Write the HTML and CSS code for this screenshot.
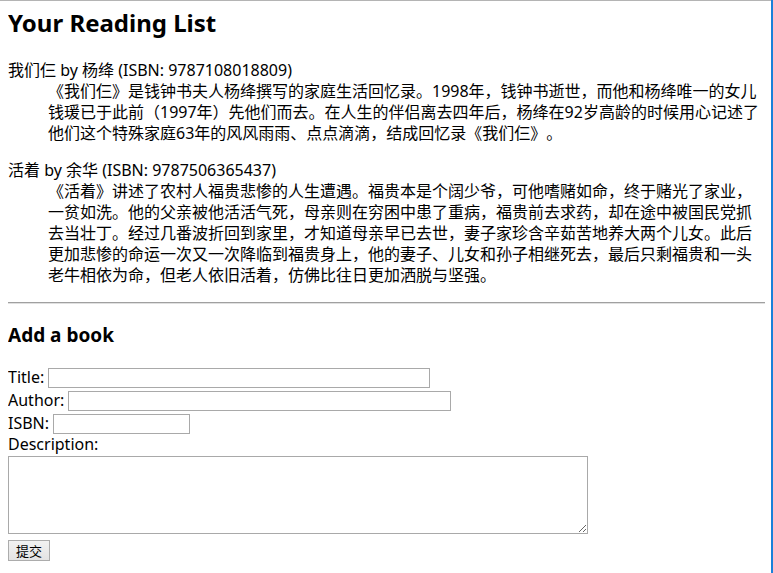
FILE: index.html
```html
<!DOCTYPE html>
<html lang="zh-CN">
<head>
<meta charset="utf-8">
<title>Your Reading List</title>
<link rel="stylesheet" href="styles.css">
</head>
<body>
<h1 class="page-title">Your Reading List</h1>
<dl class="book">
  <dt class="book-head">我们仨 by 杨绛 (ISBN: 9787108018809)</dt>
  <dd class="book-desc">《我们仨》是钱钟书夫人杨绛撰写的家庭生活回忆录。1998年，钱钟书逝世，而他和杨绛唯一的女儿钱瑗已于此前（1997年）先他们而去。在人生的伴侣离去四年后，杨绛在92岁高龄的时候用心记述了他们这个特殊家庭63年的风风雨雨、点点滴滴，结成回忆录《我们仨》。</dd>
</dl>
<dl class="book">
  <dt class="book-head">活着 by 余华 (ISBN: 9787506365437)</dt>
  <dd class="book-desc">《活着》讲述了农村人福贵悲惨的人生遭遇。福贵本是个阔少爷，可他嗜赌如命，终于赌光了家业，一贫如洗。他的父亲被他活活气死，母亲则在穷困中患了重病，福贵前去求药，却在途中被国民党抓去当壮丁。经过几番波折回到家里，才知道母亲早已去世，妻子家珍含辛茹苦地养大两个儿女。此后更加悲惨的命运一次又一次降临到福贵身上，他的妻子、儿女和孙子相继死去，最后只剩福贵和一头老牛相依为命，但老人依旧活着，仿佛比往日更加洒脱与坚强。</dd>
</dl>
<hr class="divider">
<h3 class="form-title">Add a book</h3>
<form class="book-form">
  <div class="row"><label class="lbl" for="t">Title:</label><input class="field field-title" id="t" type="text"></div>
  <div class="row"><label class="lbl" for="a">Author:</label><input class="field field-author" id="a" type="text"></div>
  <div class="row"><label class="lbl" for="i">ISBN:</label><input class="field field-isbn" id="i" type="text"></div>
  <label class="desc-label" for="d">Description:</label>
  <textarea class="desc" id="d"></textarea>
  <button class="submit" type="button">提交</button>
</form>
</body>
</html>
```
FILE: styles.css
```css
html {
  min-height: 100%;
  box-shadow: inset -2px 0 0 #1a80d9, inset 0 1px 0 #b4b4b4;
}
body {
  margin: 0 8px 8px 8px;
  font-family: "Noto Sans", "Noto Sans CJK SC", sans-serif;
  font-size: 16px;
  line-height: 21px;
  color: #000;
}
.page-title {
  font-size: 24px;
  line-height: 32px;
  font-weight: bold;
  margin: 7px 0 21px 0;
}
.book {
  margin: 16px 0;
}
.book-head {
  margin: 0;
}
.book-desc {
  margin: 0 0 0 40px;
  text-spacing-trim: space-all;
  line-break: normal;
}
.divider {
  margin: 16px 0 0 0;
  height: 0;
  border: 0;
  border-top: 1px solid #a0a0a0;
  border-bottom: 1px solid #e0e0e0;
}
.form-title {
  font-size: 19px;
  line-height: 25px;
  font-weight: bold;
  margin: 19px 0 17px 0;
}
.book-form {
  margin: 0;
}
.row {
  display: flex;
  align-items: flex-end;
  gap: 4px;
  height: 23px;
}
.field {
  box-sizing: border-box;
  height: 20px;
  border: 1px solid #a9a9a9;
  margin: 0;
  padding: 0 2px;
  font-size: 13px;
  background: #fff;
}
.field-title { width: 382px; }
.field-author { width: 383px; }
.field-isbn { width: 137px; }
.desc-label {
  display: block;
}
.desc {
  display: block;
  box-sizing: border-box;
  width: 580px;
  height: 78px;
  margin: 1px 0 0 0;
  border: 1px solid #a9a9a9;
  padding: 2px;
  font-size: 13px;
}
.submit {
  display: block;
  box-sizing: border-box;
  margin: 6px 0 0 0;
  width: 42px;
  height: 21px;
  padding: 0;
  border: 1px solid #acacac;
  border-radius: 0;
  background: linear-gradient(#f2f2f2, #e3e3e3);
  font-family: "Noto Sans CJK SC", sans-serif;
  font-size: 13px;
  line-height: 19px;
  color: #000;
}
```
